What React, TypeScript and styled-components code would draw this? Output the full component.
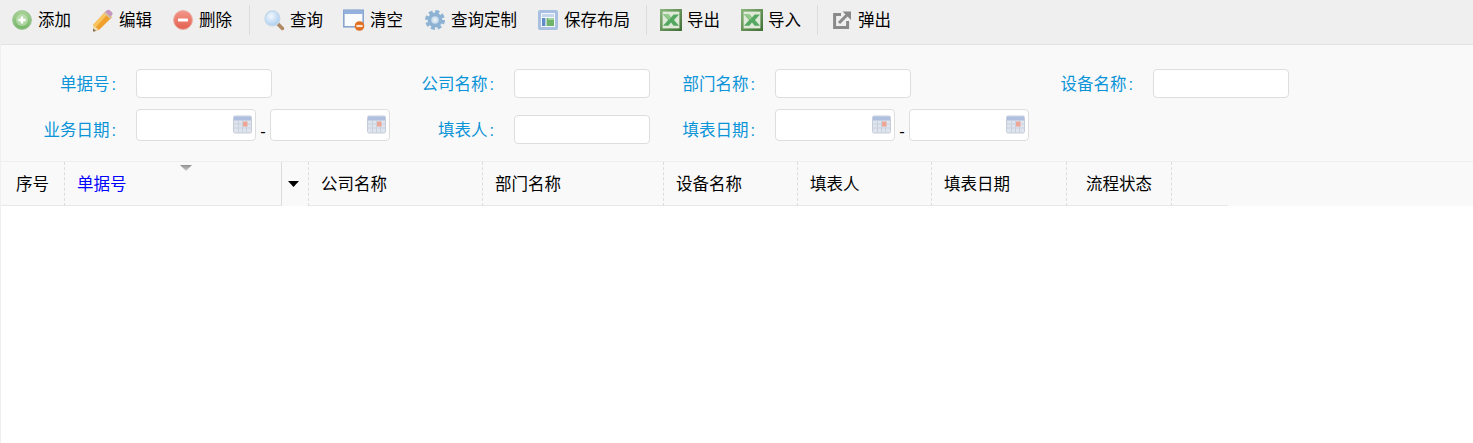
import React from 'react';
import styled, { createGlobalStyle } from 'styled-components';

const GlobalStyle = createGlobalStyle`
  html, body {
    margin: 0;
    padding: 0;
    background: #fff;
  }
  body {
    font-family: "Liberation Sans", "Noto Sans CJK SC", sans-serif;
    font-size: 16.5px;
    color: #000;
  }
`;

const Page = styled.div`
  height: 443px;
  box-sizing: border-box;
  border-left: 1px solid #efefef;
  overflow: hidden;
`;

const Toolbar = styled.div`
  display: flex;
  align-items: center;
  height: 40px;
  margin-left: -1px;
  padding: 0 0 4px 12px;
  background: #efefef;
  border-bottom: 1px solid #e2e2e2;
`;

const ToolButton = styled.div<{ $after?: number }>`
  display: flex;
  align-items: center;
  gap: 6px;
  height: 24px;
  line-height: 25px;
  white-space: nowrap;
  margin-right: ${props => props.$after ?? 21}px;
`;

const ToolText = styled.span`
  height: 24px;
`;

const IconSlot = styled.span<{ $width?: number }>`
  display: flex;
  width: ${props => props.$width ?? 20}px;
  height: 22px;
  align-items: center;

  svg {
    flex: none;
  }
`;

const ToolSeparator = styled.div<{ $after: number }>`
  width: 1px;
  height: 30px;
  margin-right: ${props => props.$after}px;
  margin-bottom: 1px;
  background: #dcdcdc;
`;

const FilterForm = styled.div`
  display: grid;
  grid-template-columns: 135px 254px 124px 136px 125px 254px 124px 136px;
  grid-template-rows: 29px 35px;
  row-gap: 11px;
  padding: 24px 0 17px;
  background: #f9f9f9;
  border-bottom: 1px solid #efefef;
`;

const FieldLabel = styled.label`
  align-self: end;
  height: 29px;
  line-height: 31px;
  padding-right: 20px;
  text-align: right;
  color: #0b94d8;
  white-space: nowrap;
`;

const LabelColon = styled.span`
  margin-left: 2px;
`;

const TextInput = styled.input`
  align-self: end;
  box-sizing: border-box;
  width: 136px;
  height: 29px;
  padding: 0 6px;
  background: #fff;
  border: 1px solid #dedede;
  border-radius: 4px;
  outline: none;
`;

const DateRange = styled.div`
  display: flex;
  align-items: flex-end;
  align-self: start;
`;

const DateBox = styled.div`
  position: relative;
  box-sizing: border-box;
  width: 120px;
  height: 32px;
  background: #fff;
  border: 1px solid #dedede;
  border-radius: 4px;
`;

const DateIcon = styled.span`
  position: absolute;
  right: 3px;
  top: 5px;
  display: flex;
`;

const RangeDash = styled.span`
  width: 14px;
  text-align: center;
  line-height: 19px;
`;

const GridHeader = styled.div`
  display: flex;
  height: 44px;
  background: #f9f9f9;
`;

const HeaderCell = styled.div<{ $width: number; $center?: boolean; $active?: boolean; $solid?: boolean; $plain?: boolean }>`
  position: relative;
  box-sizing: border-box;
  flex: none;
  width: ${props => props.$width}px;
  height: 44px;
  line-height: 44px;
  padding: ${props => (props.$center ? '0' : '0 0 0 12px')};
  text-align: ${props => (props.$center ? 'center' : 'left')};
  color: ${props => (props.$active ? '#0000ff' : '#000')};
  border-right: 1px ${props => (props.$solid ? 'solid #dcdcdc' : props.$plain ? 'none' : 'dashed #dcdcdc')};
  border-bottom: 1px solid #e8e8e8;
  white-space: nowrap;
`;

const SortMark = styled.span`
  position: absolute;
  top: 3px;
  right: 89px;
  display: flex;
`;

const MenuCell = styled.div`
  flex: none;
  box-sizing: border-box;
  display: flex;
  align-items: center;
  justify-content: center;
  width: 27px;
  height: 44px;
  padding-right: 3px;
  border-right: 1px dashed #dcdcdc;
`;

const AddIcon = () => (
  <svg width="20" height="20" viewBox="0 0 20 20">
    <defs>
      <linearGradient id="addFill" x1="0" y1="0" x2="0" y2="1">
        <stop offset="0" stopColor="#a9d396" />
        <stop offset="1" stopColor="#74b565" />
      </linearGradient>
    </defs>
    <circle cx="10" cy="10" r="9.4" fill="url(#addFill)" stroke="#9cc496" strokeWidth="1" />
    <circle cx="10" cy="10" r="6" fill="#d6ecd0" fillOpacity="0.5" />
    <path d="M10 6.4v7.2M6.4 10h7.2" stroke="#fff" strokeWidth="2.4" />
  </svg>
);

const PencilIcon = () => (
  <svg width="21" height="23" viewBox="0 0 21 23">
    <path d="M1 22.5L1 16 13.6 2.6l6.4 5.6L7 21z" fill="#f0a02c" />
    <path d="M1 16L13.6 2.6l2.4 2L3.6 18.4z" fill="#f9c560" />
    <path d="M14.6 1.6c1.2-1.2 2.2-1.2 3.2-.4l2.2 2c.8.9.9 1.8 0 2.9l-1.4 1.6-5.6-4.8z" fill="#c596bf" />
    <path d="M13 3.2l6.4 5.6-1 1.2L12 4.2z" fill="#c9c6b8" />
    <path d="M1 22.5L1 16l6 5z" fill="#efdcae" />
    <path d="M1 22.5v-3l3.2 2.4z" fill="#7b6a58" />
  </svg>
);

const RemoveIcon = () => (
  <svg width="20" height="20" viewBox="0 0 20 20">
    <defs>
      <linearGradient id="removeFill" x1="0" y1="0" x2="0" y2="1">
        <stop offset="0" stopColor="#f2978a" />
        <stop offset="1" stopColor="#e3604f" />
      </linearGradient>
    </defs>
    <circle cx="10" cy="10" r="9.4" fill="url(#removeFill)" stroke="#eaa89d" strokeWidth="1" />
    <rect x="5" y="8.4" width="10" height="3.2" rx="0.6" fill="#fff" />
  </svg>
);

const SearchIcon = () => (
  <svg width="21" height="21" viewBox="0 0 21 21">
    <defs>
      <radialGradient id="lensFill" cx="0.4" cy="0.35" r="0.7">
        <stop offset="0" stopColor="#f2f8fe" />
        <stop offset="1" stopColor="#a9cdef" />
      </radialGradient>
    </defs>
    <path d="M13 13l5.4 5.4" stroke="#b08a62" strokeWidth="3.6" strokeLinecap="round" />
    <circle cx="8.4" cy="8.4" r="7.4" fill="url(#lensFill)" stroke="#c4d8ea" strokeWidth="1.4" />
  </svg>
);

const ClearIcon = () => (
  <svg width="22" height="22" viewBox="0 0 22 22">
    <rect x="0.8" y="1.2" width="19.4" height="16.6" fill="#fafbfd" stroke="#8aa6cf" strokeWidth="1.6" />
    <rect x="0.8" y="1.2" width="19.4" height="3.8" fill="#93b1dc" />
    <circle cx="16.5" cy="17" r="4.8" fill="#e06f22" />
    <rect x="13.4" y="15.9" width="6.2" height="2.2" fill="#fbe3cf" />
  </svg>
);

const GearIcon = () => (
  <svg width="20" height="20" viewBox="0 0 20 20">
    <defs>
      <radialGradient id="gearHub" cx="0.5" cy="0.5" r="0.5">
        <stop offset="0" stopColor="#f0f5fa" />
        <stop offset="1" stopColor="#c5d8ea" />
      </radialGradient>
    </defs>
    <circle cx="10" cy="10" r="7.4" fill="#8db2d4" />
    <circle cx="10" cy="10" r="8.4" fill="none" stroke="#8db2d4" strokeWidth="3.2" strokeDasharray="4 2.6" />
    <circle cx="10" cy="10" r="3.8" fill="url(#gearHub)" />
  </svg>
);

const LayoutIcon = () => (
  <svg width="20" height="20" viewBox="0 0 20 20">
    <rect x="0.5" y="0.5" width="19" height="19" rx="1" fill="#a9c0e2" stroke="#a8bfe0" />
    <rect x="3" y="3" width="14" height="14" fill="#f4f7fb" />
    <rect x="4" y="4" width="12" height="3" fill="#c3d6ee" />
    <rect x="4" y="8" width="3.4" height="8" fill="#5f8ccb" />
    <rect x="8.6" y="8" width="7.4" height="8" fill="#6fb26a" />
    <rect x="10" y="8" width="6" height="2" fill="#a4d29e" />
  </svg>
);

const ExcelIcon = ({ id }: { id: string }) => (
  <svg width="22" height="22" viewBox="0 0 22 22">
    <defs>
      <linearGradient id={id} x1="0" y1="0" x2="1" y2="1">
        <stop offset="0" stopColor="#8ab67b" />
        <stop offset="1" stopColor="#3f6f35" />
      </linearGradient>
    </defs>
    <rect x="0" y="0" width="22" height="22" fill={`url(#${id})`} />
    <rect x="2.6" y="2.6" width="16.8" height="16.8" fill="#dfebd8" />
    <path d="M3 5.6h5.6l2.4 3 2.6-3H19l-5 5.4 5 5.8h-5.4L11 13.4l-2.6 3.4H3l5.2-5.8z" fill="#55a862" />
    <path d="M3 5.6h5.6l2.4 3-2 2.4z" fill="#93ca8a" />
  </svg>
);

const PopupIcon = () => (
  <svg width="18" height="18" viewBox="0 0 18 18">
    <path d="M8 3.4H1.6V16.4H14.6V10" fill="none" stroke="#8a8a8a" strokeWidth="3" />
    <path d="M6 12L15 3" stroke="#8a8a8a" strokeWidth="3" />
    <path d="M9.6 0.6H18V9z" fill="#8a8a8a" />
  </svg>
);

const CalendarIcon = () => (
  <svg width="19" height="19" viewBox="0 0 19 19">
    <rect x="0.5" y="1" width="18" height="17" rx="1.5" fill="#e0e4ec" stroke="#c6ccd8" />
    <rect x="1" y="1.5" width="17" height="4" fill="#aebfe0" />
    <path d="M1 9h17M1 13h17M5.5 6v12M9.5 6v12M13.5 6v12" stroke="#c8d1e0" strokeWidth="1" />
    <rect x="10" y="6.5" width="4.5" height="5" fill="#eda596" />
  </svg>
);

const SortTriangle = () => (
  <svg width="12" height="6" viewBox="0 0 12 6">
    <defs>
      <linearGradient id="sortFill" x1="0" y1="0" x2="0" y2="1">
        <stop offset="0" stopColor="#8f8f8f" />
        <stop offset="1" stopColor="#d0d0d0" />
      </linearGradient>
    </defs>
    <path d="M0 0h12L6 6z" fill="url(#sortFill)" />
  </svg>
);

const MenuTriangle = () => (
  <svg width="11" height="6" viewBox="0 0 11 6">
    <path d="M0 0h11L5.5 6z" fill="#000" />
  </svg>
);

const DateField = () => (
  <DateBox>
    <DateIcon><CalendarIcon /></DateIcon>
  </DateBox>
);

const App: React.FC = () => {
  return (
    <Page>
      <GlobalStyle />
      <Toolbar>
        <ToolButton><IconSlot><AddIcon /></IconSlot><ToolText>添加</ToolText></ToolButton>
        <ToolButton><IconSlot $width={21}><PencilIcon /></IconSlot><ToolText>编辑</ToolText></ToolButton>
        <ToolButton $after={17}><IconSlot><RemoveIcon /></IconSlot><ToolText>删除</ToolText></ToolButton>
        <ToolSeparator $after={14} />
        <ToolButton $after={20}><IconSlot><SearchIcon /></IconSlot><ToolText>查询</ToolText></ToolButton>
        <ToolButton $after={22}><IconSlot $width={21}><ClearIcon /></IconSlot><ToolText>清空</ToolText></ToolButton>
        <ToolButton $after={21}><IconSlot><GearIcon /></IconSlot><ToolText>查询定制</ToolText></ToolButton>
        <ToolButton $after={16}><IconSlot><LayoutIcon /></IconSlot><ToolText>保存布局</ToolText></ToolButton>
        <ToolSeparator $after={13} />
        <ToolButton><IconSlot $width={21}><ExcelIcon id="excelOut" /></IconSlot><ToolText>导出</ToolText></ToolButton>
        <ToolButton $after={16}><IconSlot $width={21}><ExcelIcon id="excelIn" /></IconSlot><ToolText>导入</ToolText></ToolButton>
        <ToolSeparator $after={15} />
        <ToolButton><IconSlot $width={19}><PopupIcon /></IconSlot><ToolText>弹出</ToolText></ToolButton>
      </Toolbar>

      <FilterForm>
        <FieldLabel>单据号<LabelColon>:</LabelColon></FieldLabel>
        <TextInput />
        <FieldLabel>公司名称<LabelColon>:</LabelColon></FieldLabel>
        <TextInput />
        <FieldLabel>部门名称<LabelColon>:</LabelColon></FieldLabel>
        <TextInput />
        <FieldLabel>设备名称<LabelColon>:</LabelColon></FieldLabel>
        <TextInput />

        <FieldLabel>业务日期<LabelColon>:</LabelColon></FieldLabel>
        <DateRange>
          <DateField />
          <RangeDash>-</RangeDash>
          <DateField />
        </DateRange>
        <FieldLabel>填表人<LabelColon>:</LabelColon></FieldLabel>
        <TextInput />
        <FieldLabel>填表日期<LabelColon>:</LabelColon></FieldLabel>
        <DateRange>
          <DateField />
          <RangeDash>-</RangeDash>
          <DateField />
        </DateRange>
      </FilterForm>

      <GridHeader>
        <HeaderCell $width={64} $center>序号</HeaderCell>
        <HeaderCell $width={217} $active $solid>
          单据号
          <SortMark><SortTriangle /></SortMark>
        </HeaderCell>
        <MenuCell><MenuTriangle /></MenuCell>
        <HeaderCell $width={174}>公司名称</HeaderCell>
        <HeaderCell $width={181}>部门名称</HeaderCell>
        <HeaderCell $width={134}>设备名称</HeaderCell>
        <HeaderCell $width={134}>填表人</HeaderCell>
        <HeaderCell $width={135}>填表日期</HeaderCell>
        <HeaderCell $width={105} $center>流程状态</HeaderCell>
        <HeaderCell $width={56} $plain />
      </GridHeader>
    </Page>
  );
};

export default App;
